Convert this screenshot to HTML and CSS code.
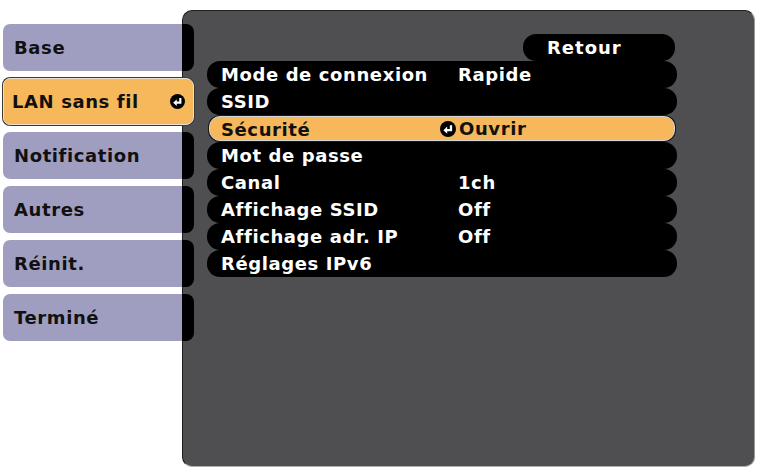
FILE: index.html
```html
<!DOCTYPE html>
<html lang="fr">
<head>
<meta charset="utf-8">
<title>LAN sans fil</title>
<link rel="stylesheet" href="styles.css">
</head>
<body>
<div class="screen">
  <nav class="tabs">
    <div class="tab">Base</div>
    <div class="tab active">LAN sans fil
      <svg class="enter" viewBox="0 0 16 16" width="15" height="15"><circle cx="8" cy="8" r="8" fill="#000"/><path d="M11 4.2V9.2H6.6" fill="none" stroke="#fff" stroke-width="2.3"/><path d="M3.4 9.2L7.2 5.6V12.8Z" fill="#fff"/></svg>
    </div>
    <div class="tab">Notification</div>
    <div class="tab">Autres</div>
    <div class="tab">Réinit.</div>
    <div class="tab">Terminé</div>
  </nav>
  <main class="panel">
    <div class="menu">
      <div class="back">Retour</div>
      <div class="row"><span class="label">Mode de connexion</span><span class="value">Rapide</span></div>
      <div class="row"><span class="label">SSID</span><span class="value"></span></div>
      <div class="row selected"><span class="label">Sécurité</span><span class="value"><svg class="enter inline" viewBox="0 0 16 16" width="16" height="16"><circle cx="8" cy="8" r="8" fill="#000"/><path d="M11 4.2V9.2H6.6" fill="none" stroke="#fff" stroke-width="2.3"/><path d="M3.4 9.2L7.2 5.6V12.8Z" fill="#fff"/></svg>Ouvrir</span></div>
      <div class="row"><span class="label">Mot de passe</span><span class="value"></span></div>
      <div class="row"><span class="label">Canal</span><span class="value">1ch</span></div>
      <div class="row"><span class="label">Affichage SSID</span><span class="value">Off</span></div>
      <div class="row"><span class="label">Affichage adr. IP</span><span class="value">Off</span></div>
      <div class="row"><span class="label">Réglages IPv6</span><span class="value"></span></div>
    </div>
  </main>
</div>
</body>
</html>
```

FILE: styles.css
```css
html, body {
  margin: 0;
  padding: 0;
  background: #ffffff;
}

body {
  font-family: "DejaVu Sans", Verdana, sans-serif;
  font-weight: bold;
  font-size: 18px;
  letter-spacing: 0.6px;
}

.screen {
  display: flex;
  align-items: flex-start;
  padding: 10px 0 0 3px;
}

.tabs {
  width: 179px;
  flex: none;
  display: flex;
  flex-direction: column;
  gap: 7px;
  margin-top: 14px;
  position: relative;
  z-index: 1;
}

.tab {
  width: 191px;
  height: 47px;
  box-sizing: border-box;
  display: flex;
  align-items: center;
  padding-left: 11px;
  color: #111;
  background: linear-gradient(to right, #9f9ec0 179px, #000 179px);
  border-radius: 7px 8px 8px 7px;
}

.tab.active {
  background: #f6b85a;
  border: 1px solid #e9e2d2;
  box-shadow: 0 0 0 1px #3a3a3a;
  padding-left: 8px;
  justify-content: space-between;
  padding-right: 8px;
}

.enter {
  display: block;
  flex: none;
}

.panel {
  flex: none;
  width: 573px;
  height: 457px;
  box-sizing: border-box;
  background: #4f4f51;
  border: 1px solid #1e1e1e;
  border-bottom-color: #b0b0b0;
  border-right-color: #9a9a9a;
  border-radius: 10px;
  padding: 23px 0 0 24px;
}

.menu {
  width: 470px;
  display: flex;
  flex-direction: column;
}

.back {
  align-self: flex-end;
  width: 152px;
  height: 27px;
  margin-right: 2px;
  box-sizing: border-box;
  padding-left: 24px;
  line-height: 27px;
  background: #000;
  color: #fff;
  border-radius: 13px;
  letter-spacing: 1px;
}

.row {
  display: flex;
  height: 27px;
  line-height: 27px;
  background: #000;
  color: #fff;
  border-radius: 13px;
  padding-left: 14px;
}

.row.selected {
  background: #f6b85a;
  color: #111;
  margin: 1px 2px 1px 2px;
  height: 25px;
  line-height: 25px;
  padding-left: 11px;
  border: 1px solid #d6d6d6;
  box-shadow: 0 0 0 1px #1a1a1a;
  border-radius: 11px;
  box-sizing: border-box;
}

.label {
  width: 237px;
  flex: none;
  white-space: nowrap;
}

.value {
  display: flex;
  align-items: center;
  white-space: nowrap;
}

.enter.inline {
  margin-left: -18px;
  margin-right: 3px;
}
```
